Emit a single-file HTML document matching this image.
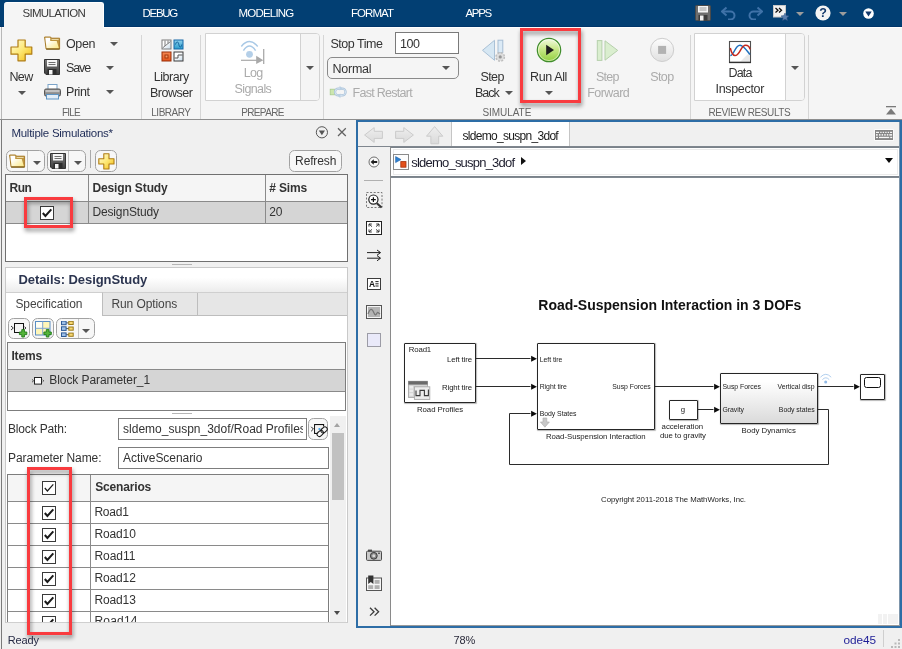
<!DOCTYPE html>
<html><head><meta charset="utf-8">
<style>
*{box-sizing:border-box;margin:0;padding:0}
html,body{width:902px;height:649px;overflow:hidden;background:#f0f0f0;font-family:"Liberation Sans",sans-serif;font-size:12px;color:#222}
.a{position:absolute}
.t{position:absolute;white-space:nowrap;line-height:1}
</style></head><body><div id="root" style="position:absolute;left:0;top:0;width:902px;height:649px;will-change:transform;transform:translateZ(0)">
<div class="a" style="left:0px;top:0px;width:902px;height:27px;background:#023f73;"></div>
<div class="a" style="left:0px;top:26px;width:902px;height:1px;background:#00356a;"></div>
<div class="a" style="left:0px;top:27px;width:902px;height:1px;background:#fff;"></div>
<div class="a" style="left:4px;top:2px;width:100px;height:26px;background:#f5f5f5;border-radius:3px 3px 0 0;border-top:1px solid #fff;border-right:1px solid #fff;"></div>
<div class="t" style="left:22.50px;top:8.00px;font-size:11.5px;color:#3a3a3a;letter-spacing:-0.693px;">SIMULATION</div>
<div class="t" style="left:142.50px;top:8.00px;font-size:11.5px;color:#fff;letter-spacing:-1.279px;">DEBUG</div>
<div class="t" style="left:238.50px;top:8.00px;font-size:11.5px;color:#fff;letter-spacing:-0.792px;">MODELING</div>
<div class="t" style="left:351.00px;top:8.00px;font-size:11.5px;color:#fff;letter-spacing:-0.949px;">FORMAT</div>
<div class="t" style="left:465.50px;top:8.00px;font-size:11.5px;color:#fff;letter-spacing:-1.296px;">APPS</div>
<div class="a" style="left:0px;top:28px;width:902px;height:91px;background:#f5f5f5;"></div>
<div class="a" style="left:0px;top:119px;width:902px;height:1px;background:#8e8e8e;"></div>
<div class="a" style="left:1px;top:27px;width:1px;height:92px;background:#b8b8b8;"></div>
<div class="a" style="left:141px;top:35px;width:1px;height:84px;background:#d6d6d6;"></div>
<div class="a" style="left:200px;top:35px;width:1px;height:84px;background:#d6d6d6;"></div>
<div class="a" style="left:323px;top:35px;width:1px;height:84px;background:#d6d6d6;"></div>
<div class="a" style="left:690px;top:35px;width:1px;height:84px;background:#d6d6d6;"></div>
<div class="a" style="left:808px;top:35px;width:1px;height:84px;background:#d6d6d6;"></div>
<div class="t" style="left:62.00px;top:108.00px;font-size:10px;color:#666;letter-spacing:-0.779px;">FILE</div>
<div class="t" style="left:151.25px;top:108.00px;font-size:10px;color:#666;letter-spacing:-0.480px;">LIBRARY</div>
<div class="t" style="left:241.25px;top:108.00px;font-size:10px;color:#666;letter-spacing:-0.650px;">PREPARE</div>
<div class="t" style="left:482.50px;top:108.00px;font-size:10px;color:#666;letter-spacing:-0.065px;">SIMULATE</div>
<div class="t" style="left:708.50px;top:108.00px;font-size:10px;color:#666;letter-spacing:-0.419px;">REVIEW RESULTS</div>
<div class="t" style="left:9.50px;top:71.00px;font-size:12.5px;color:#333;letter-spacing:-0.669px;">New</div>
<div class="a" style="left:18.3px;top:91.0px;width:0;height:0;border-left:4.0px solid transparent;border-right:4.0px solid transparent;border-top:4.4px solid #555"></div>
<div class="t" style="left:66.00px;top:38.00px;font-size:12.5px;color:#333;letter-spacing:-0.394px;">Open</div>
<div class="a" style="left:110.0px;top:42.0px;width:0;height:0;border-left:4.0px solid transparent;border-right:4.0px solid transparent;border-top:4.4px solid #555"></div>
<div class="t" style="left:66.00px;top:62.00px;font-size:12.5px;color:#333;letter-spacing:-1.123px;">Save</div>
<div class="a" style="left:106.0px;top:66.0px;width:0;height:0;border-left:4.0px solid transparent;border-right:4.0px solid transparent;border-top:4.4px solid #555"></div>
<div class="t" style="left:66.00px;top:86.00px;font-size:12.5px;color:#333;letter-spacing:-0.440px;">Print</div>
<div class="a" style="left:106.0px;top:90.0px;width:0;height:0;border-left:4.0px solid transparent;border-right:4.0px solid transparent;border-top:4.4px solid #555"></div>
<div class="t" style="left:153.75px;top:71.00px;font-size:12.5px;color:#333;letter-spacing:-0.458px;">Library</div>
<div class="t" style="left:150.00px;top:87.00px;font-size:12.5px;color:#333;letter-spacing:-0.477px;">Browser</div>
<div class="a" style="left:205px;top:33px;width:115px;height:68px;background:#fff;border:1px solid #d2d2d2;border-radius:0 4px 4px 0;"></div>
<div class="a" style="left:300px;top:33px;width:1px;height:68px;background:#d2d2d2;"></div>
<div class="a" style="left:301px;top:34px;width:18px;height:66px;background:#f5f5f5;border-radius:0 3px 3px 0;"></div>
<div class="a" style="left:306.0px;top:66.0px;width:0;height:0;border-left:4.0px solid transparent;border-right:4.0px solid transparent;border-top:4.4px solid #555"></div>
<div class="t" style="left:243.75px;top:67.00px;font-size:12.5px;color:#ababab;letter-spacing:-0.701px;">Log</div>
<div class="t" style="left:234.50px;top:83.00px;font-size:12.5px;color:#ababab;letter-spacing:-0.607px;">Signals</div>
<div class="t" style="left:330.50px;top:38.00px;font-size:12.5px;color:#333;letter-spacing:-0.475px;">Stop Time</div>
<div class="a" style="left:395px;top:32px;width:64px;height:22px;background:#fff;border:1px solid #7a7a7a;"></div>
<div class="t" style="left:400.00px;top:38.00px;font-size:12.5px;color:#333;letter-spacing:-0.451px;">100</div>
<div class="a" style="left:327px;top:57px;width:132px;height:22px;background:#f5f5f5;border:1px solid #8a8a8a;border-radius:5px;"></div>
<div class="t" style="left:332.50px;top:63.00px;font-size:12.5px;color:#333;letter-spacing:-0.255px;">Normal</div>
<div class="a" style="left:442.0px;top:66.0px;width:0;height:0;border-left:4.0px solid transparent;border-right:4.0px solid transparent;border-top:4.4px solid #555"></div>
<div class="t" style="left:352.50px;top:87.00px;font-size:12.5px;color:#ababab;letter-spacing:-0.714px;">Fast Restart</div>
<div class="t" style="left:480.50px;top:71.00px;font-size:12.5px;color:#333;letter-spacing:-0.616px;">Step</div>
<div class="t" style="left:475.00px;top:87.00px;font-size:12.5px;color:#333;letter-spacing:-1.010px;">Back</div>
<div class="a" style="left:504.75px;top:91.0px;width:0;height:0;border-left:4.0px solid transparent;border-right:4.0px solid transparent;border-top:4.4px solid #555"></div>
<div class="t" style="left:530.00px;top:71.00px;font-size:12.5px;color:#333;letter-spacing:-0.372px;">Run All</div>
<div class="a" style="left:544.75px;top:91.0px;width:0;height:0;border-left:4.0px solid transparent;border-right:4.0px solid transparent;border-top:4.4px solid #555"></div>
<div class="t" style="left:596.00px;top:71.00px;font-size:12.5px;color:#ababab;letter-spacing:-0.741px;">Step</div>
<div class="t" style="left:587.25px;top:87.00px;font-size:12.5px;color:#ababab;letter-spacing:-0.549px;">Forward</div>
<div class="t" style="left:650.25px;top:71.00px;font-size:12.5px;color:#ababab;letter-spacing:-0.616px;">Stop</div>
<div class="a" style="left:520px;top:28px;width:60.6px;height:75px;border:3px solid #f93b3f;filter:drop-shadow(1px 3px 2px rgba(0,0,0,.45))"></div>
<div class="a" style="left:694px;top:33px;width:111px;height:68px;background:#fff;border:1px solid #d2d2d2;border-radius:0 4px 4px 0;"></div>
<div class="a" style="left:785px;top:33px;width:1px;height:68px;background:#d2d2d2;"></div>
<div class="a" style="left:786px;top:34px;width:18px;height:66px;background:#f5f5f5;border-radius:0 3px 3px 0;"></div>
<div class="a" style="left:790.8px;top:66.0px;width:0;height:0;border-left:4.0px solid transparent;border-right:4.0px solid transparent;border-top:4.4px solid #555"></div>
<div class="t" style="left:728.50px;top:67.00px;font-size:12.5px;color:#333;letter-spacing:-0.851px;">Data</div>
<div class="t" style="left:715.50px;top:83.00px;font-size:12.5px;color:#333;letter-spacing:-0.324px;">Inspector</div>
<svg class="a" style="left:695px;top:5px" width="16" height="16" viewBox="0 0 16 16"><rect x="0.5" y="0.5" width="15" height="15" rx="1" fill="#6e6e6e" stroke="#4a4a4a"/><rect x="3" y="1" width="10" height="6.5" fill="#f4f4f4"/><rect x="4.5" y="2.5" width="7" height="1" fill="#999"/><rect x="4.5" y="4.5" width="7" height="1" fill="#999"/><rect x="3.5" y="10" width="9" height="5.5" fill="#3c3c3c"/><rect x="5" y="10.5" width="3.5" height="5" fill="#f0f0f0"/></svg>
<svg class="a" style="left:721px;top:6px" width="16" height="14" viewBox="0 0 16 14"><path d="M2 5.5 H9.5 a4 4 0 0 1 0 8 H7" fill="none" stroke="#3f72a8" stroke-width="2"/><path d="M5.5 1.5 L1 5.5 L5.5 9.5" fill="none" stroke="#3f72a8" stroke-width="2"/></svg>
<svg class="a" style="left:747px;top:6px" width="16" height="14" viewBox="0 0 16 14"><path d="M14 5.5 H6.5 a4 4 0 0 0 0 8 H9" fill="none" stroke="#3f72a8" stroke-width="2"/><path d="M10.5 1.5 L15 5.5 L10.5 9.5" fill="none" stroke="#3f72a8" stroke-width="2"/></svg>
<svg class="a" style="left:773px;top:5px" width="17" height="17" viewBox="0 0 17 17"><rect x="0.5" y="0.5" width="12" height="11.5" fill="#f2f2f2" stroke="#c8c8c8"/><path d="M2.5 3 L5 5.2 L2.5 7.4 M6 3 L8.5 5.2 L6 7.4" fill="none" stroke="#111" stroke-width="1.3"/><path d="M12 8 l1.2 2.6 2.8 .3 -2.1 1.9 .6 2.8 -2.5 -1.4 -2.5 1.4 .6 -2.8 -2.1 -1.9 2.8 -.3z" fill="#5b7fae" stroke="#2d4f80" stroke-width=".5"/></svg>
<div class="a" style="left:795.5px;top:11.8px;width:0;height:0;border-left:4.0px solid transparent;border-right:4.0px solid transparent;border-top:4px solid #9c9c9c"></div>
<svg class="a" style="left:815px;top:5px" width="16" height="16" viewBox="0 0 16 16"><circle cx="8" cy="8" r="7.6" fill="#f4f4f4"/><text x="8" y="12.3" font-family="Liberation Sans" font-weight="bold" font-size="12.5" text-anchor="middle" fill="#12386a">?</text></svg>
<div class="a" style="left:839.2px;top:11.8px;width:0;height:0;border-left:4.0px solid transparent;border-right:4.0px solid transparent;border-top:4px solid #9c9c9c"></div>
<svg class="a" style="left:862.5px;top:8.2px" width="11" height="11" viewBox="0 0 11 11"><circle cx="5.5" cy="5.5" r="5.3" fill="#fff"/><path d="M2.3 3.6 H8.7 L5.5 8.4z" fill="#12386a"/></svg>
<svg class="a" style="left:885px;top:105px" width="12" height="11" viewBox="0 0 12 11"><rect x="1" y="1" width="10" height="1.3" fill="#7a7a7a"/><path d="M6 3.5 L11 9.5 H1z" fill="#7a7a7a"/></svg>
<svg width="0" height="0" class="a"><defs><linearGradient id="gy" x1="0" y1="0" x2="1" y2="1"><stop offset="0" stop-color="#fffbd8"/><stop offset=".5" stop-color="#fde876"/><stop offset="1" stop-color="#f2b90f"/></linearGradient><linearGradient id="gf" x1="0" y1="0" x2="0" y2="1"><stop offset="0" stop-color="#fffef0"/><stop offset="1" stop-color="#f7e391"/></linearGradient><linearGradient id="gfo" x1="0" y1="0" x2="1" y2="1"><stop offset=".25" stop-color="#ffffff"/><stop offset="1" stop-color="#fbe883"/></linearGradient><linearGradient id="ggr" x1="0" y1="0" x2="0" y2="1"><stop offset="0" stop-color="#f4fbe4"/><stop offset=".45" stop-color="#c9e88a"/><stop offset="1" stop-color="#8fcf3c"/></linearGradient><linearGradient id="gst" x1="0" y1="0" x2="0" y2="1"><stop offset="0" stop-color="#fdfdfd"/><stop offset="1" stop-color="#e0e0e0"/></linearGradient><linearGradient id="gbl" x1="0" y1="0" x2="0" y2="1"><stop offset="0" stop-color="#8fd0ec"/><stop offset="1" stop-color="#2a9ccc"/></linearGradient><linearGradient id="gor" x1="0" y1="0" x2="0" y2="1"><stop offset="0" stop-color="#f58a55"/><stop offset="1" stop-color="#e4541a"/></linearGradient><linearGradient id="gwb" x1="0" y1="0" x2="1" y2="1"><stop offset="0.4" stop-color="#fff"/><stop offset="1" stop-color="#c4d8e8"/></linearGradient><linearGradient id="gfl" x1="0" y1="0" x2="0" y2="1"><stop offset="0" stop-color="#7a7a7a"/><stop offset="1" stop-color="#3e3e3e"/></linearGradient></defs></svg>
<svg class="a" style="left:9.5px;top:38.5px" width="23" height="23" viewBox="0 0 23 23"><path d="M8 1 H15.2 V8 H21.8 V15.2 H15.2 V21.8 H8 V15.2 H1 V8 H8z" fill="url(#gy)" stroke="#b07d14" stroke-width="1.2" stroke-linejoin="round"/></svg>
<svg class="a" style="left:44px;top:36.2px" width="17" height="14" viewBox="0 0 17 14"><path d="M.6 1 H6.6 L7.4 2.2 H15.6 V13 H2.1z" fill="#bf953f" stroke="#a87c2a" stroke-width="1" stroke-linejoin="round"/><path d="M7.6 3.5 H14.6" stroke="#ecd9a5" stroke-width="1"/><path d="M1.3 1.8 H6.2 V4.9 H12.7 L14.9 12.3 H2.5z" fill="url(#gfo)"/><path d="M2.2 13.1 H15.6" stroke="#6e5212" stroke-width="1"/></svg>
<svg class="a" style="left:44px;top:59px" width="16" height="16" viewBox="0 0 16 16"><path d="M.5 .5 H15.5 V15.5 H2 L.5 14z" fill="url(#gfl)" stroke="#333" stroke-width="1"/><rect x="3" y="1" width="10" height="6.5" fill="#f6f6f6"/><rect x="4.5" y="3" width="7" height="1" fill="#6f6f6f"/><rect x="4.5" y="5" width="7" height="1" fill="#6f6f6f"/><rect x="3.5" y="10" width="9" height="5.5" fill="#2c2c2c"/><rect x="5" y="11" width="3.5" height="4.5" fill="#f4f4f4"/></svg>
<svg class="a" style="left:43.5px;top:83.5px" width="17" height="16" viewBox="0 0 17 16"><rect x="4" y=".5" width="9" height="5" fill="#fff" stroke="#7ba3c8" stroke-width="1"/><rect x=".5" y="5" width="16" height="7" rx="1.5" fill="#8d8d8d" stroke="#555" stroke-width="1"/><rect x="1.5" y="6" width="14" height="2.2" fill="#c2c2c2"/><rect x="2.5" y="10.5" width="12" height="4.5" fill="#e3eef8" stroke="#5f95c4" stroke-width="1"/></svg>
<svg class="a" style="left:160.5px;top:38.5px" width="23" height="23" viewBox="0 0 23 23"><rect x="1" y="1" width="9" height="9" fill="url(#gwb)" stroke="#7d7d7d" stroke-width="1"/><path d="M4 1.5 V7 M7 1.5 V4.5 M1.5 9 L9.5 2.5" stroke="#7d7d7d" stroke-width="1" fill="none"/><rect x="13" y="1" width="9" height="9" fill="url(#gbl)" stroke="#1668a8" stroke-width="1"/><path d="M14.5 5.5 C15.5 2 17 2 17.8 5.5 S20 9 20.8 5.5" stroke="#0f5f9a" stroke-width="1" fill="none"/><rect x="1" y="13" width="9" height="9" fill="url(#gor)" stroke="#9a2f08" stroke-width="1"/><rect x="4" y="16" width="3" height="3" fill="#f59a66" stroke="#a3360c" stroke-width="1"/><rect x="13" y="13" width="9" height="9" fill="url(#gwb)" stroke="#3c3c3c" stroke-width="1"/><path d="M13.5 19 H17 V16 H21.5" stroke="#555" stroke-width="1" fill="none"/></svg>
<svg class="a" style="left:238px;top:39px" width="30" height="27" viewBox="0 0 30 27"><path d="M3.3 7.4 Q11.5 -2.2 19.7 7.4" fill="none" stroke="#a9c9e6" stroke-width="1.5"/><path d="M5.4 11.6 Q11.5 2.6 17.6 11.6" fill="none" stroke="#a9c9e6" stroke-width="1.5"/><circle cx="11.5" cy="15.3" r="3.4" fill="#b4cfe8"/><path d="M3 21.3 H19" stroke="#a9a9a9" stroke-width="1.2"/><path d="M18.2 16.8 L25.3 21.3 L18.2 25z" fill="#a9a9a9"/><path d="M25.7 10 V25" stroke="#a9a9a9" stroke-width="1.3"/></svg>
<svg class="a" style="left:329px;top:85px" width="18" height="14" viewBox="0 0 18 14"><rect x="1.2" y="4.2" width="5" height="5.6" fill="#cce6ae" stroke="#a9cb90" stroke-width=".8"/><rect x="6" y="3.6" width="10.6" height="6.8" rx="3.4" fill="none" stroke="#a9c1d8" stroke-width="2.2"/><rect x="6" y="3.6" width="10.6" height="6.8" rx="3.4" fill="none" stroke="#d5e4f2" stroke-width="1"/><path d="M10.6 .8 L13.6 3.6 L10.6 5.6z" fill="#b9cfe3"/><path d="M11.4 13.2 L8.4 10.4 L11.4 8.4z" fill="#b9cfe3"/></svg>
<svg class="a" style="left:481px;top:39px" width="25" height="23" viewBox="0 0 25 23"><path d="M1.5 11.3 L13.5 1.3 V21.3z" fill="#d6e7f3" stroke="#aac1d6" stroke-width="1" stroke-linejoin="round"/><rect x="17" y="1.2" width="4.8" height="12.5" fill="#dbeaf6" stroke="#a5bdd3" stroke-width="1"/><circle cx="19.2" cy="17.9" r="4.2" fill="#dedede" stroke="#bdbdbd" stroke-width="1.4" stroke-dasharray="2 1.3"/><circle cx="19.2" cy="17.9" r="1.6" fill="#979797"/></svg>
<svg class="a" style="left:536px;top:37px" width="26" height="26" viewBox="0 0 26 26"><circle cx="13" cy="13" r="11.7" fill="url(#ggr)" stroke="#3f8c2c" stroke-width="1.2"/><circle cx="13" cy="13" r="10.6" fill="none" stroke="#fff" stroke-opacity=".55" stroke-width=".9"/><path d="M10.2 7.8 L18 13 L10.2 18.2z" fill="#1d1d1d"/></svg>
<svg class="a" style="left:596px;top:39px" width="23" height="23" viewBox="0 0 23 23"><rect x="1.3" y="1.6" width="4.6" height="19.8" fill="#daeecf" stroke="#b6d0ac" stroke-width="1"/><path d="M9 1.8 L21.7 11.4 L9 21.2z" fill="#daeecf" stroke="#b6d0ac" stroke-width="1" stroke-linejoin="round"/></svg>
<svg class="a" style="left:649px;top:37px" width="26" height="26" viewBox="0 0 26 26"><circle cx="13.1" cy="12.9" r="11.6" fill="url(#gst)" stroke="#cdcdcd" stroke-width="1"/><rect x="9.1" y="8.9" width="8" height="8" fill="#b2b2b2"/></svg>
<svg class="a" style="left:728px;top:40px" width="24" height="24" viewBox="0 0 24 24"><rect x="1.5" y="1.5" width="21" height="21" fill="#fff" stroke="#505050" stroke-width="1.1"/><path d="M12 22 L22 12 V22z" fill="#e9e9e9"/><path d="M1 22.4 H23" stroke="#333" stroke-width="1.4"/><path d="M2.3 15.6 C6 15.6 7 5.3 12 5.3 C15.5 5.3 19 11 22 14.5" fill="none" stroke="#1f6fbd" stroke-width="1.5"/><path d="M2.3 8 C3.5 13 5 15.6 7 15.6 C12 15.6 12.5 5.3 17.7 5.3 C20 5.3 21.5 7 22 9.3" fill="none" stroke="#c5281c" stroke-width="1.5"/></svg>
<div class="a" style="left:1px;top:120px;width:1px;height:529px;background:#7a7a7a;"></div>
<div class="t" style="left:11.40px;top:128.00px;font-size:11.5px;color:#1d2a55;letter-spacing:-0.256px;">Multiple Simulations*</div>
<svg class="a" style="left:315px;top:126px" width="14" height="13" viewBox="0 0 14 13"><circle cx="6.9" cy="6.3" r="5.6" fill="none" stroke="#555" stroke-width="1"/><path d="M3.8 4.6 H10 L6.9 9.2z" fill="#555"/></svg>
<svg class="a" style="left:337px;top:127px" width="10" height="10" viewBox="0 0 10 10"><path d="M1 1.2 L8.8 9 M8.8 1.2 L1 9" stroke="#626262" stroke-width="1.25" fill="none"/></svg>
<div class="a" style="left:6.4px;top:150.3px;width:38.2px;height:21.4px;background:#f7f7f7;border:1px solid #a2a2a2;border-radius:5.5px;"></div>
<div class="a" style="left:27.3px;top:151.3px;width:1px;height:19.4px;background:#c4c4c4;"></div>
<svg class="a" style="left:9.2px;top:154px" width="17" height="14" viewBox="0 0 17 14"><path d="M.6 1 H6.6 L7.4 2.2 H15.6 V13 H2.1z" fill="#bf953f" stroke="#a87c2a" stroke-width="1" stroke-linejoin="round"/><path d="M7.6 3.5 H14.6" stroke="#ecd9a5" stroke-width="1"/><path d="M1.3 1.8 H6.2 V4.9 H12.7 L14.9 12.3 H2.5z" fill="url(#gfo)"/><path d="M2.2 13.1 H15.6" stroke="#6e5212" stroke-width="1"/></svg>
<div class="a" style="left:32.6px;top:161.3px;width:0;height:0;border-left:4.0px solid transparent;border-right:4.0px solid transparent;border-top:4px solid #555"></div>
<div class="a" style="left:47.2px;top:150.3px;width:38.6px;height:21.4px;background:#f7f7f7;border:1px solid #a2a2a2;border-radius:5.5px;"></div>
<div class="a" style="left:68.2px;top:151.3px;width:1px;height:19.4px;background:#c4c4c4;"></div>
<svg class="a" style="left:50px;top:153px" width="16" height="16" viewBox="0 0 16 16"><path d="M.5 .5 H15.5 V15.5 H2 L.5 14z" fill="url(#gfl)" stroke="#333" stroke-width="1"/><rect x="3" y="1" width="10" height="6.5" fill="#f6f6f6"/><rect x="4.5" y="3" width="7" height="1" fill="#6f6f6f"/><rect x="4.5" y="5" width="7" height="1" fill="#6f6f6f"/><rect x="3.5" y="10" width="9" height="5.5" fill="#2c2c2c"/><rect x="5" y="11" width="3.5" height="4.5" fill="#f4f4f4"/></svg>
<div class="a" style="left:73.6px;top:161.3px;width:0;height:0;border-left:4.0px solid transparent;border-right:4.0px solid transparent;border-top:4px solid #555"></div>
<div class="a" style="left:90.3px;top:150px;width:1px;height:18px;background:#aaa;"></div>
<div class="a" style="left:95.1px;top:150.3px;width:21.6px;height:21.4px;background:#f7f7f7;border:1px solid #a2a2a2;border-radius:5.5px;"></div>
<svg class="a" style="left:97.5px;top:152.8px" width="17" height="17" viewBox="0 0 17 17"><path d="M5.8 .8 H11 V5.8 H16 V11 H11 V16 H5.8 V11 H.8 V5.8 H5.8z" fill="url(#gy)" stroke="#b07d14" stroke-width="1.1" stroke-linejoin="round"/></svg>
<div class="a" style="left:289.2px;top:150.3px;width:52.4px;height:21.4px;background:#f7f7f7;border:1px solid #a2a2a2;border-radius:5.5px;"></div>
<div class="t" style="left:295.10px;top:155.00px;font-size:12px;color:#333;letter-spacing:-0.131px;">Refresh</div>
<div class="a" style="left:5px;top:174px;width:343px;height:88px;background:#fff;border:1px solid #707070;"></div>
<div class="a" style="left:6px;top:175px;width:341px;height:26px;background:#f5f5f5;"></div>
<div class="a" style="left:6px;top:201px;width:341px;height:1px;background:#8a8a8a;"></div>
<div class="a" style="left:6px;top:202px;width:341px;height:21px;background:#d5d5d5;"></div>
<div class="a" style="left:6px;top:223px;width:341px;height:1px;background:#8a8a8a;"></div>
<div class="a" style="left:88px;top:175px;width:1px;height:48px;background:#8a8a8a;"></div>
<div class="a" style="left:265px;top:175px;width:1px;height:48px;background:#8a8a8a;"></div>
<div class="t" style="left:9.40px;top:182.00px;font-size:12px;color:#333;letter-spacing:-0.408px;font-weight:bold;">Run</div>
<div class="t" style="left:92.40px;top:182.00px;font-size:12px;color:#333;letter-spacing:-0.123px;font-weight:bold;">Design Study</div>
<div class="t" style="left:269.20px;top:182.00px;font-size:12px;color:#333;letter-spacing:-0.131px;font-weight:bold;"># Sims</div>
<div class="t" style="left:92.40px;top:206.00px;font-size:12px;color:#333;letter-spacing:-0.131px;">DesignStudy</div>
<div class="t" style="left:269.20px;top:206.00px;font-size:12px;color:#333;letter-spacing:-0.173px;">20</div>
<svg class="a" style="left:40px;top:206px" width="14" height="14" viewBox="0 0 14 14"><rect x=".5" y=".5" width="13" height="13" fill="#fff" stroke="#3a3a3a" stroke-width="1"/><path d="M2.8 7 L5.4 10 L11.3 3.3" fill="none" stroke="#1a1a1a" stroke-width="2"/></svg>
<div class="a" style="left:172px;top:264px;width:20px;height:1px;background:#b5b5b5;"></div>
<div class="a" style="left:5px;top:267px;width:343px;height:356px;background:#fff;border:1px solid #c9c9c9;"></div>
<div class="a" style="left:6px;top:268px;width:341px;height:24px;background:linear-gradient(#fff 40%,#ececec);"></div>
<div class="t" style="left:18.40px;top:273.00px;font-size:13px;color:#2c3550;letter-spacing:-0.056px;font-weight:bold;">Details: DesignStudy</div>
<div class="a" style="left:6px;top:292px;width:341px;height:24px;background:#e6e6e6;border-top:1px solid #cfcfcf;border-bottom:1px solid #bdbdbd;"></div>
<div class="a" style="left:6px;top:292px;width:97px;height:24px;background:#fff;border-top:1px solid #cfcfcf;border-right:1px solid #bdbdbd;"></div>
<div class="a" style="left:197px;top:293px;width:1px;height:22px;background:#bdbdbd;"></div>
<div class="t" style="left:15.40px;top:298.00px;font-size:12px;color:#444;letter-spacing:-0.080px;">Specification</div>
<div class="t" style="left:111.40px;top:298.00px;font-size:12px;color:#444;letter-spacing:-0.082px;">Run Options</div>
<div class="a" style="left:8.4px;top:318.2px;width:21.3px;height:21.2px;background:#f7f7f7;border:1px solid #a2a2a2;border-radius:5.5px;"></div>
<svg class="a" style="left:10px;top:321px" width="18" height="17" viewBox="0 0 18 17"><rect x="4.5" y="2.5" width="9" height="9" fill="#f4f4f4" stroke="#111" stroke-width="1"/><path d="M1 5 L3.3 7 L1 9 M14.5 5.8 L16 7 L14.5 8.2" fill="none" stroke="#222" stroke-width=".9"/><path d="M11.8 8.6 H14.4 V11 H16.8 V13.6 H14.4 V16 H11.8 V13.6 H9.4 V11 H11.8z" fill="#55b43a" stroke="#1f7a16" stroke-width=".9"/></svg>
<div class="a" style="left:32.4px;top:318.2px;width:21.2px;height:21.2px;background:#f7f7f7;border:1px solid #a2a2a2;border-radius:5.5px;"></div>
<svg class="a" style="left:35px;top:321px" width="17" height="17" viewBox="0 0 17 17"><rect x=".5" y=".5" width="14.5" height="13.5" fill="#fff6b8" stroke="#5b8ec4" stroke-width="1"/><rect x="1" y="1" width="6.5" height="6" fill="#fffef2"/><path d="M7.7 .5 V14 M.5 7.3 H15" stroke="#7fa6d2" stroke-width="1"/><path d="M11.3 8.6 H13.9 V11 H16.3 V13.6 H13.9 V16 H11.3 V13.6 H8.9 V11 H11.3z" fill="#55b43a" stroke="#1f7a16" stroke-width=".9"/></svg>
<div class="a" style="left:56.4px;top:318.2px;width:38.2px;height:21.2px;background:#f7f7f7;border:1px solid #a2a2a2;border-radius:5.5px;"></div>
<div class="a" style="left:77.5px;top:319.2px;width:1px;height:19.2px;background:#c4c4c4;"></div>
<svg class="a" style="left:60.8px;top:321px" width="14" height="18" viewBox="0 0 14 18"><path d="M4 1.9 H9" stroke="#555" stroke-width="1"/><rect x=".5" y="0.09999999999999987" width="4.6" height="3.6" fill="#9ec0e8" stroke="#2d5a96" stroke-width="1"/><rect x="7.8" y="0.2999999999999998" width="4.4" height="3.2" fill="#f7d873" stroke="#9a7a1a" stroke-width="1"/><path d="M4 7.6 H9" stroke="#555" stroke-width="1"/><rect x=".5" y="5.8" width="4.6" height="3.6" fill="#9ec0e8" stroke="#2d5a96" stroke-width="1"/><rect x="7.8" y="6.0" width="4.4" height="3.2" fill="#f7d873" stroke="#9a7a1a" stroke-width="1"/><path d="M4 13.7 H9" stroke="#555" stroke-width="1"/><rect x=".5" y="11.899999999999999" width="4.6" height="3.6" fill="#9ec0e8" stroke="#2d5a96" stroke-width="1"/><rect x="7.8" y="12.1" width="4.4" height="3.2" fill="#f7d873" stroke="#9a7a1a" stroke-width="1"/></svg>
<div class="a" style="left:82.2px;top:329.0px;width:0;height:0;border-left:4.0px solid transparent;border-right:4.0px solid transparent;border-top:4px solid #555"></div>
<div class="a" style="left:7px;top:342px;width:339px;height:69px;background:#fff;border:1px solid #7d7d7d;"></div>
<div class="a" style="left:8px;top:343px;width:337px;height:26px;background:#f5f5f5;"></div>
<div class="a" style="left:8px;top:369px;width:337px;height:1px;background:#8a8a8a;"></div>
<div class="a" style="left:8px;top:370px;width:337px;height:21px;background:#d5d5d5;"></div>
<div class="a" style="left:8px;top:391px;width:337px;height:1px;background:#8a8a8a;"></div>
<div class="t" style="left:11.40px;top:350.00px;font-size:12px;color:#333;letter-spacing:-0.169px;font-weight:bold;">Items</div>
<svg class="a" style="left:31px;top:376px" width="14" height="10" viewBox="0 0 14 10"><rect x="3.5" y="1.5" width="7" height="6.6" fill="#fff" stroke="#222" stroke-width="1"/><path d="M1 3.4 L2.6 4.8 L1 6.2 M11.6 3.8 L12.8 4.8 L11.6 5.8" fill="none" stroke="#333" stroke-width=".8"/></svg>
<div class="t" style="left:49.30px;top:374.00px;font-size:12px;color:#333;letter-spacing:-0.079px;">Block Parameter_1</div>
<div class="a" style="left:172px;top:413px;width:20px;height:1px;background:#b5b5b5;"></div>
<div class="t" style="left:8.00px;top:423.00px;font-size:12px;color:#333;letter-spacing:-0.163px;">Block Path:</div>
<div class="a" style="left:118px;top:418px;width:189px;height:22px;background:#fff;border:1px solid #7d7d7d;"></div>
<div class="a" style="left:119px;top:419px;width:183.5px;height:20px;overflow:hidden"><div class="t" style="left:4.1px;top:3.8px;font-size:12px;color:#333;letter-spacing:0px">sldemo_suspn_3dof/Road Profiles</div></div>
<div class="a" style="left:308.3px;top:418px;width:19.7px;height:21.6px;background:#f7f7f7;border:1px solid #a2a2a2;border-radius:5.5px;"></div>
<svg class="a" style="left:310px;top:422px" width="18" height="16" viewBox="0 0 18 16"><path d="M13.6 4.6 V2.6 H4.6 V11.4 H7.4" fill="none" stroke="#111" stroke-width="1.1"/><path d="M5.2 3.2 H13 V5 L7.6 10.8 H5.2z" fill="#f1f1f1"/><path d="M1.2 4.8 L3.4 7 L1.2 9.2" fill="none" stroke="#222" stroke-width="1"/><circle cx="9.4" cy="7" r="1.1" fill="#3fa0e8"/><g transform="rotate(-42 12.2 9.8)" fill="none" stroke="#1a1a1a" stroke-width="1.05"><rect x="6.2" y="7.4" width="6.8" height="4.6" rx="2.3"/><rect x="11.4" y="7.4" width="6.8" height="4.6" rx="2.3"/></g></svg>
<div class="t" style="left:8.00px;top:452.00px;font-size:12px;color:#333;letter-spacing:-0.086px;">Parameter Name:</div>
<div class="a" style="left:118px;top:447px;width:211px;height:22px;background:#fff;border:1px solid #7d7d7d;"></div>
<div class="t" style="left:123.10px;top:452.00px;font-size:12px;color:#333;letter-spacing:-0.060px;">ActiveScenario</div>
<div class="a" style="left:330px;top:416px;width:16px;height:206px;background:#f0f0f0;"></div>
<div class="a" style="left:333.8px;top:423px;width:0;height:0;border-left:3.7px solid transparent;border-right:3.7px solid transparent;border-bottom:4px solid #a3a3a3"></div>
<div class="a" style="left:331.5px;top:433px;width:12.3px;height:67px;background:#c1c1c1;"></div>
<div class="a" style="left:334.0px;top:610.9px;width:0;height:0;border-left:3.8px solid transparent;border-right:3.8px solid transparent;border-top:4px solid #4a4a4a"></div>
<div class="a" style="left:7px;top:474px;width:322px;height:148px;overflow:hidden;border-left:1px solid #7d7d7d;border-top:1px solid #7d7d7d;border-right:1px solid #7d7d7d;background:#fff"><div class="a" style="left:0;top:0;width:320px;height:26px;background:#f5f5f5"></div><div class="a" style="left:82px;top:0;width:1px;height:160px;background:#8a8a8a"></div><div class="a" style="left:0;top:26px;width:320px;height:1px;background:#8a8a8a"></div><div class="a" style="left:0;top:48px;width:320px;height:1px;background:#8a8a8a"></div><div class="a" style="left:0;top:70px;width:320px;height:1px;background:#8a8a8a"></div><div class="a" style="left:0;top:92px;width:320px;height:1px;background:#8a8a8a"></div><div class="a" style="left:0;top:114px;width:320px;height:1px;background:#8a8a8a"></div><div class="a" style="left:0;top:136px;width:320px;height:1px;background:#8a8a8a"></div></div>
<div class="t" style="left:95.20px;top:481.00px;font-size:12px;color:#333;letter-spacing:-0.162px;font-weight:bold;">Scenarios</div>
<svg class="a" style="left:42.2px;top:481px" width="14" height="14" viewBox="0 0 14 14"><rect x=".5" y=".5" width="13" height="13" fill="#fff" stroke="#3a3a3a" stroke-width="1"/><path d="M2.8 7 L5.4 10 L11.3 3.3" fill="none" stroke="#1a1a1a" stroke-width="1.2"/></svg>
<div class="t" style="left:94.40px;top:506.00px;font-size:12px;color:#333;letter-spacing:-0.212px;">Road1</div>
<svg class="a" style="left:42.2px;top:505.6px" width="14" height="14" viewBox="0 0 14 14"><rect x=".5" y=".5" width="13" height="13" fill="#fff" stroke="#3a3a3a" stroke-width="1"/><path d="M2.8 7 L5.4 10 L11.3 3.3" fill="none" stroke="#1a1a1a" stroke-width="2"/></svg>
<div class="t" style="left:94.40px;top:528.00px;font-size:12px;color:#333;letter-spacing:-0.122px;">Road10</div>
<svg class="a" style="left:42.2px;top:527.6px" width="14" height="14" viewBox="0 0 14 14"><rect x=".5" y=".5" width="13" height="13" fill="#fff" stroke="#3a3a3a" stroke-width="1"/><path d="M2.8 7 L5.4 10 L11.3 3.3" fill="none" stroke="#1a1a1a" stroke-width="2"/></svg>
<div class="t" style="left:94.40px;top:550.00px;font-size:12px;color:#333;letter-spacing:-0.040px;">Road11</div>
<svg class="a" style="left:42.2px;top:549.6px" width="14" height="14" viewBox="0 0 14 14"><rect x=".5" y=".5" width="13" height="13" fill="#fff" stroke="#3a3a3a" stroke-width="1"/><path d="M2.8 7 L5.4 10 L11.3 3.3" fill="none" stroke="#1a1a1a" stroke-width="2"/></svg>
<div class="t" style="left:94.40px;top:572.00px;font-size:12px;color:#333;letter-spacing:-0.122px;">Road12</div>
<svg class="a" style="left:42.2px;top:571.6px" width="14" height="14" viewBox="0 0 14 14"><rect x=".5" y=".5" width="13" height="13" fill="#fff" stroke="#3a3a3a" stroke-width="1"/><path d="M2.8 7 L5.4 10 L11.3 3.3" fill="none" stroke="#1a1a1a" stroke-width="2"/></svg>
<div class="t" style="left:94.40px;top:594.00px;font-size:12px;color:#333;letter-spacing:-0.122px;">Road13</div>
<svg class="a" style="left:42.2px;top:593.6px" width="14" height="14" viewBox="0 0 14 14"><rect x=".5" y=".5" width="13" height="13" fill="#fff" stroke="#3a3a3a" stroke-width="1"/><path d="M2.8 7 L5.4 10 L11.3 3.3" fill="none" stroke="#1a1a1a" stroke-width="2"/></svg>
<div class="a" style="left:8px;top:612px;width:320px;height:10px;overflow:hidden"><div class="t" style="left:86.4px;top:2.8px;font-size:12px;color:#333;letter-spacing:0.2px">Road14</div><svg class="a" style="left:34.2px;top:3.6px" width="14" height="14" viewBox="0 0 14 14"><rect x=".5" y=".5" width="13" height="13" fill="#fff" stroke="#3a3a3a"/><path d="M2.8 7 L5.4 10 L11.3 3.3" fill="none" stroke="#1a1a1a" stroke-width="2"/></svg></div>
<div class="a" style="left:6px;top:622px;width:341px;height:1px;background:#cfcfcf;"></div>
<div class="a" style="left:24px;top:197px;width:49px;height:31px;border:3px solid #f93b3f;filter:drop-shadow(1px 3px 2px rgba(0,0,0,.45))"></div>
<div class="a" style="left:27px;top:467px;width:45px;height:167.5px;border:3px solid #f93b3f;filter:drop-shadow(1px 3px 2px rgba(0,0,0,.45))"></div>
<div class="t" style="left:7.80px;top:635.00px;font-size:11px;color:#272b45;letter-spacing:-0.159px;">Ready</div>
<div class="t" style="left:453.60px;top:635.00px;font-size:11px;color:#2a2a3a;letter-spacing:-0.172px;">78%</div>
<div class="t" style="left:843.40px;top:635.00px;font-size:11.8px;color:#1d1d96;letter-spacing:-0.062px;">ode45</div>
<div class="a" style="left:356px;top:120px;width:546px;height:508px;background:#2d6da6;"></div>
<div class="a" style="left:358px;top:122px;width:541.5px;height:504px;background:#f0f0f0;"></div>
<div class="a" style="left:899px;top:122px;width:1px;height:504px;background:#7d95ab;"></div>
<div class="a" style="left:358px;top:146px;width:541px;height:1px;background:#7f868e;"></div>
<div class="a" style="left:390px;top:147px;width:509px;height:1px;background:#7a828a;"></div>
<svg width="0" height="0" class="a"><defs><linearGradient id="gnav" x1="0" y1="0" x2="0" y2="1"><stop offset="0" stop-color="#eeeeee"/><stop offset="1" stop-color="#dadada"/></linearGradient><linearGradient id="gbd" x1="0" y1="0" x2="0" y2="1"><stop offset="0.15" stop-color="#ffffff"/><stop offset="1" stop-color="#d9d9d9"/></linearGradient></defs></svg>
<svg class="a" style="left:363.6px;top:127.4px" width="19" height="16" viewBox="0 0 19 16"><path d="M.6 8 L10.2 .6 V4.3 H18.4 V11.4 H10.2 V15.4z" fill="url(#gnav)" stroke="#cbcbcb" stroke-width="1" stroke-linejoin="round"/></svg>
<svg class="a" style="left:394.6px;top:127.4px" width="19" height="16" viewBox="0 0 19 16"><g transform="translate(19,0) scale(-1,1)"><path d="M.6 8 L10.2 .6 V4.3 H18.4 V11.4 H10.2 V15.4z" fill="url(#gnav)" stroke="#cbcbcb" stroke-width="1" stroke-linejoin="round"/></g></svg>
<svg class="a" style="left:426.4px;top:125.6px" width="18" height="19" viewBox="0 0 18 19"><path d="M8.6 .6 L16.8 10.2 H12.7 V17.8 H4.9 V10.2 H.5z" fill="url(#gnav)" stroke="#cbcbcb" stroke-width="1" stroke-linejoin="round"/></svg>
<div class="a" style="left:451px;top:122px;width:118.5px;height:24px;background:#fff;border-left:1px solid #c5c5c5;border-right:1px solid #c5c5c5;"></div>
<div class="t" style="left:462.40px;top:130.00px;font-size:12px;color:#1a1a1a;letter-spacing:-0.694px;">sldemo_suspn_3dof</div>
<svg class="a" style="left:874px;top:129px" width="20" height="12" viewBox="0 0 20 12"><rect x="0" y="0" width="20" height="12" rx="1.2" fill="#fbfbfb"/><rect x="1" y="1" width="18" height="10" fill="#868686"/><rect x="2" y="2.8" width="3" height="1.2" fill="#f4f4f4"/><rect x="6.2" y="2.8" width="1.4" height="1.2" fill="#f4f4f4"/><rect x="8.7" y="2.8" width="1.4" height="1.2" fill="#f4f4f4"/><rect x="11.2" y="2.8" width="1.4" height="1.2" fill="#f4f4f4"/><rect x="13.7" y="2.8" width="1.4" height="1.2" fill="#f4f4f4"/><rect x="16" y="2.8" width="2.1" height="1.2" fill="#f4f4f4"/><rect x="2" y="5" width="1.7" height="1.7" fill="#ececec"/><rect x="5" y="5" width="1.5" height="1.7" fill="#ececec"/><rect x="7.6" y="5" width="1.5" height="1.7" fill="#ececec"/><rect x="10.2" y="5" width="1.5" height="1.7" fill="#ececec"/><rect x="12.8" y="5" width="1.5" height="1.7" fill="#ececec"/><rect x="15.3" y="5" width="2.8" height="1.7" fill="#ececec"/><rect x="2" y="7.8" width="2" height="1.3" fill="#f8f8f8"/><rect x="5" y="7.8" width="10.2" height="1.3" fill="#f8f8f8"/><rect x="16.2" y="7.8" width="2" height="1.3" fill="#f8f8f8"/></svg>
<div class="a" style="left:391px;top:148px;width:508px;height:28px;background:#fff;"></div>
<div class="a" style="left:392.5px;top:149.3px;width:505.2px;height:25.4px;border:1px solid #ebebeb;"></div>
<div class="a" style="left:391px;top:176px;width:508px;height:1px;background:#7a828a;"></div>
<div class="a" style="left:391px;top:177px;width:508px;height:1px;background:#808890;"></div>
<svg class="a" style="left:393px;top:154px" width="16" height="16" viewBox="0 0 16 16"><rect x=".5" y=".5" width="15" height="15" fill="#fdfdfd" stroke="#8a8a8a" stroke-width="1"/><path d="M2.6 2.6 L8 5.6 L2.6 8.6z" fill="#2d7fd0" stroke="#1d5fa8" stroke-width=".6"/><rect x="7.8" y="7.6" width="5.2" height="5.6" fill="#e4501a" stroke="#a5300a" stroke-width=".8"/></svg>
<div class="t" style="left:411.30px;top:156.00px;font-size:13px;color:#1c1c2c;letter-spacing:-0.791px;">sldemo_suspn_3dof</div>
<div class="a" style="left:520.7px;top:157.2px;width:0;height:0;border-top:4.6px solid transparent;border-bottom:4.6px solid transparent;border-left:5.6px solid #111"></div>
<div class="a" style="left:884.8000000000001px;top:158.1px;width:0;height:0;border-left:4.8px solid transparent;border-right:4.8px solid transparent;border-top:5.2px solid #0a0a0a"></div>
<div class="a" style="left:358px;top:147px;width:32px;height:479px;background:#f0f0f0;"></div>
<div class="a" style="left:390px;top:147px;width:1px;height:479px;background:#8a8a8a;"></div>
<svg class="a" style="left:368px;top:156px" width="12" height="12" viewBox="0 0 12 12"><circle cx="6" cy="6" r="5" fill="#f8f8f8" stroke="#6f6f6f" stroke-width="1"/><path d="M2.6 6 L5.8 3.2 V5 H9.2 V7 H5.8 V8.8z" fill="#1e1e1e"/></svg>
<div class="a" style="left:364px;top:180px;width:19px;height:1px;background:#b0b0b0;"></div>
<svg class="a" style="left:366px;top:192px" width="17" height="17" viewBox="0 0 17 17"><rect x=".5" y=".5" width="15.5" height="15" fill="none" stroke="#777" stroke-width="1" stroke-dasharray="2 1.6"/><circle cx="7.4" cy="7.6" r="4.6" fill="#fff" stroke="#222" stroke-width="1.2"/><path d="M5 7.6 H9.8 M7.4 5.2 V10" stroke="#111" stroke-width="1.2"/><path d="M10.8 11.2 L15.6 15.6" stroke="#333" stroke-width="2"/></svg>
<svg class="a" style="left:366px;top:221px" width="16" height="14" viewBox="0 0 16 14"><rect x=".5" y=".5" width="15" height="13" fill="#fff" stroke="#222" stroke-width="1"/><path d="M3 5.6 V3 H5.8 M3.2 3.2 L6 5.6 M13 5.6 V3 H10.2 M12.8 3.2 L10 5.6 M3 8.4 V11 H5.8 M3.2 10.8 L6 8.4 M13 8.4 V11 H10.2 M12.8 10.8 L10 8.4" fill="none" stroke="#222" stroke-width=".9"/></svg>
<svg class="a" style="left:367px;top:249px" width="15" height="13" viewBox="0 0 15 13"><path d="M0 3.6 H13 M0 9.2 H13" stroke="#222" stroke-width="1"/><path d="M10 1 L13.6 3.6 L10 6.2 M10 6.6 L13.6 9.2 L10 11.8" fill="none" stroke="#222" stroke-width="1"/></svg>
<svg class="a" style="left:367px;top:278px" width="14" height="12" viewBox="0 0 14 12"><rect x=".5" y=".5" width="13" height="11" fill="#fff" stroke="#3c3c3c" stroke-width="1"/><text x="2" y="9.2" font-family="Liberation Sans" font-weight="bold" font-size="8.4" fill="#111">A</text><path d="M8.4 3.6 H11.6 M8.4 5.8 H11.6 M8.4 8 H11.6" stroke="#222" stroke-width="1"/></svg>
<svg class="a" style="left:366px;top:305px" width="16" height="14" viewBox="0 0 16 14"><rect x=".5" y=".5" width="15" height="13" fill="#f4f4f4" stroke="#555" stroke-width="1"/><rect x="2" y="2" width="12" height="10" fill="#b4b4b4"/><path d="M2 9 C4 3 6 3 8 8 S11 6 12 7.5 L14 9" fill="none" stroke="#777" stroke-width="1.2"/></svg>
<div class="a" style="left:367px;top:333px;width:14px;height:14px;background:#e9e9f9;border:1px solid #9c9ca6;"></div>
<svg class="a" style="left:366px;top:549px" width="16" height="12" viewBox="0 0 16 12"><rect x=".5" y="2.2" width="15" height="9.2" rx="1" fill="#c9c9c9" stroke="#4a4a4a" stroke-width="1"/><rect x="2" y=".6" width="4" height="2" fill="#4a4a4a"/><circle cx="7.8" cy="6.8" r="3.4" fill="#8a8a8a" stroke="#3a3a3a" stroke-width="1"/><circle cx="7.8" cy="6.8" r="1.5" fill="#d8d8d8"/><rect x="12" y="3.6" width="2" height="1.3" fill="#555"/></svg>
<svg class="a" style="left:366px;top:574.6px" width="16" height="16" viewBox="0 0 16 16"><rect x=".5" y="3" width="15" height="12.5" fill="#f6f6f6" stroke="#555" stroke-width="1"/><rect x="8.6" y="5" width="5" height="3.8" fill="#b0b0b0"/><rect x="2.2" y="10.2" width="5" height="3.8" fill="#b0b0b0"/><rect x="8.6" y="10.2" width="5" height="3.8" fill="#b0b0b0"/><path d="M2.2 .4 H7.4 V9 L4.8 7 L2.2 9z" fill="#333"/></svg>
<svg class="a" style="left:368.5px;top:607px" width="11" height="9.5" viewBox="0 0 11 9.5"><path d="M1 .8 L5 4.7 L1 8.6 M5.6 .8 L9.6 4.7 L5.6 8.6" fill="none" stroke="#3a3a3a" stroke-width="1.3"/></svg>
<div class="a" style="left:391px;top:178px;width:508px;height:447px;background:#fff;"></div>
<div class="a" style="left:391px;top:625px;width:509px;height:1px;background:#9a9a9a;"></div>
<div class="a" style="left:878px;top:614px;width:4px;height:10px;background:#f2f2f2;"></div>
<div class="a" style="left:883px;top:614px;width:4px;height:10px;background:#f2f2f2;"></div>
<div class="a" style="left:888px;top:614px;width:10px;height:10px;background:#f2f2f2;"></div>
<div class="t" style="left:538.30px;top:298.00px;font-size:14px;color:#111;letter-spacing:-0.018px;font-weight:bold;">Road-Suspension Interaction in 3 DOFs</div>
<div class="a" style="left:404px;top:343px;width:72px;height:60px;background:#fff;border:1px solid #262626;box-shadow:.5px .7px 1px rgba(0,0,0,.28);border-radius:1px;"></div>
<div class="a" style="left:537px;top:343px;width:118px;height:87px;background:#fff;border:1px solid #262626;box-shadow:.5px .7px 1px rgba(0,0,0,.28);border-radius:1px;"></div>
<div class="a" style="left:669px;top:400px;width:29px;height:20px;background:#fff;border:1px solid #262626;box-shadow:.5px .7px 1px rgba(0,0,0,.28);border-radius:1px;"></div>
<div class="a" style="left:720px;top:373px;width:98px;height:51px;border:1px solid #262626;background:linear-gradient(#fff 15%,#dadada);box-shadow:.5px .7px 1px rgba(0,0,0,.28);border-radius:1px;"></div>
<div class="a" style="left:860px;top:374px;width:25px;height:26px;background:#fff;border:1px solid #262626;box-shadow:.5px .7px 1px rgba(0,0,0,.28);border-radius:1px;"></div>
<div class="a" style="left:863.5px;top:377.3px;width:17.2px;height:10.6px;background:#fff;border:1.3px solid #111;border-radius:2.5px;"></div>
<div class="t" style="left:408.80px;top:346.00px;font-size:7.8px;color:#222;letter-spacing:-0.157px;">Road1</div>
<div class="t" style="left:447.00px;top:356.00px;font-size:7.8px;color:#222;letter-spacing:-0.123px;">Left tire</div>
<div class="t" style="left:442.10px;top:384.00px;font-size:7.8px;color:#222;letter-spacing:-0.141px;">Right tire</div>
<div class="t" style="left:417.00px;top:406.00px;font-size:7.8px;color:#222;letter-spacing:-0.055px;">Road Profiles</div>
<div class="t" style="left:539.70px;top:357.00px;font-size:6.9px;color:#222;letter-spacing:-0.034px;">Left tire</div>
<div class="t" style="left:539.70px;top:384.00px;font-size:6.9px;color:#222;letter-spacing:-0.041px;">Right tire</div>
<div class="t" style="left:539.70px;top:411.00px;font-size:6.9px;color:#222;letter-spacing:-0.037px;">Body States</div>
<div class="t" style="left:612.30px;top:384.00px;font-size:6.9px;color:#222;letter-spacing:-0.030px;">Susp Forces</div>
<div class="t" style="left:545.90px;top:433.00px;font-size:7.8px;color:#222;letter-spacing:-0.033px;">Road-Suspension Interaction</div>
<div class="t" style="left:680.70px;top:406.00px;font-size:7.8px;color:#222;letter-spacing:0.000px;">g</div>
<div class="t" style="left:661.60px;top:423.00px;font-size:7.8px;color:#222;letter-spacing:-0.055px;">acceleration</div>
<div class="t" style="left:659.90px;top:432.00px;font-size:7.8px;color:#222;letter-spacing:-0.052px;">due to gravity</div>
<div class="t" style="left:722.50px;top:384.00px;font-size:6.9px;color:#222;letter-spacing:-0.021px;">Susp Forces</div>
<div class="t" style="left:722.50px;top:407.00px;font-size:6.9px;color:#222;letter-spacing:-0.050px;">Gravity</div>
<div class="t" style="left:777.50px;top:384.00px;font-size:6.9px;color:#222;letter-spacing:-0.000px;">Vertical disp</div>
<div class="t" style="left:778.80px;top:407.00px;font-size:6.9px;color:#222;letter-spacing:-0.014px;">Body states</div>
<div class="t" style="left:741.60px;top:427.00px;font-size:7.8px;color:#222;letter-spacing:0.009px;">Body Dynamics</div>
<div class="t" style="left:601.10px;top:496.00px;font-size:7.8px;color:#222;letter-spacing:-0.031px;">Copyright 2011-2018 The MathWorks, Inc.</div>
<svg class="a" style="left:0;top:0" width="902" height="649" viewBox="0 0 902 649"><g fill="none" stroke="#2b2b2b" stroke-width="1"><path d="M476 358.5 H530.5"/><path d="M476 386.5 H530.5"/><path d="M655 386.5 H713.5"/><path d="M698 409.5 H713.5"/><path d="M818 386.5 H853.5"/><path d="M818 409.5 H828.5 V464.5 H509.5 V413.5 H530.5"/></g><path d="M531.1 355.7 L536.9 358.75 L531.1 361.8z" fill="#0c0c0c"/><path d="M531.1 383.7 L536.9 386.75 L531.1 389.8z" fill="#0c0c0c"/><path d="M531.1 410.7 L536.9 413.75 L531.1 416.8z" fill="#0c0c0c"/><path d="M714.1 383.7 L719.9 386.75 L714.1 389.8z" fill="#0c0c0c"/><path d="M714.1 406.7 L719.9 409.75 L714.1 412.8z" fill="#0c0c0c"/><path d="M854.1 383.7 L859.9 386.75 L854.1 389.8z" fill="#0c0c0c"/><path d="M820.4 377.2 Q825.8 371.4 831.2 377.2" fill="none" stroke="#a9caec" stroke-width=".9"/><path d="M822.4 379.6 Q825.8 376 829.2 379.6" fill="none" stroke="#a9caec" stroke-width=".9"/><circle cx="825.7" cy="382" r="1.5" fill="#90b9e6"/><path d="M543 418 H546.8 V422 H549.4 L544.9 427.2 L540.4 422 H543z" fill="#c8c8c8" stroke="#aaa" stroke-width=".6"/><rect x="408.4" y="381.2" width="19.2" height="16.4" fill="#d4d4d4" stroke="#9a9a9a" stroke-width=".7"/><rect x="408.4" y="381.2" width="19.2" height="3.4" fill="#6a6a6a"/><rect x="409.4" y="386" width="3.6" height="2.6" fill="#ececec"/><rect x="409.4" y="389.6" width="3.6" height="2.6" fill="#ececec"/><rect x="409.4" y="393.2" width="3.6" height="2.6" fill="#ececec"/><rect x="414.4" y="386.8" width="15.4" height="12.6" fill="#ededed" stroke="#a8a8a8" stroke-width=".9"/><path d="M416 390.4 V395.6 H420 V390.4 H424.4 V395.6 H428.4 V389.6" fill="none" stroke="#3a3a3a" stroke-width="1.1"/></svg>
<div class="a" style="left:883px;top:630px;width:1px;height:17px;background:#cfcfcf;"></div>
<svg class="a" style="left:890.5px;top:638.5px" width="10" height="10" viewBox="0 0 10 10"><rect x="7" y="0" width="2" height="2" fill="#b9b9b9"/><rect x="3.5" y="3.5" width="2" height="2" fill="#b9b9b9"/><rect x="7" y="3.5" width="2" height="2" fill="#b9b9b9"/><rect x="0" y="7" width="2" height="2" fill="#b9b9b9"/><rect x="3.5" y="7" width="2" height="2" fill="#b9b9b9"/><rect x="7" y="7" width="2" height="2" fill="#b9b9b9"/></svg>
</div></body></html>
